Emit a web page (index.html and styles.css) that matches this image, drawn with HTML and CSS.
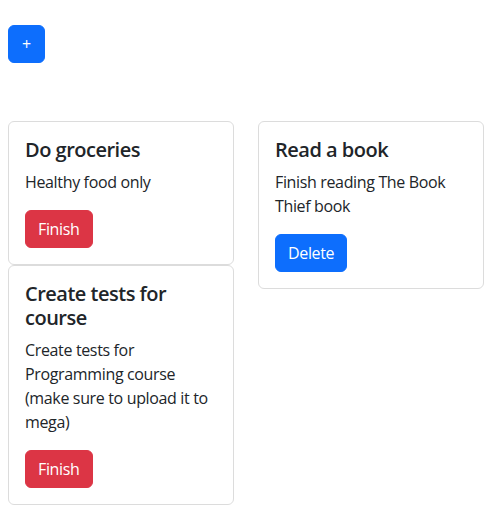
FILE: index.html
```html
<!DOCTYPE html>
<html lang="en">
<head>
<meta charset="utf-8">
<title>Tasks</title>
<link rel="stylesheet" href="styles.css">
</head>
<body>
<div class="toolbar">
  <button class="btn btn-primary btn-add">+</button>
</div>
<div class="board">
  <div class="column">
    <div class="card">
      <h5 class="card-title">Do groceries</h5>
      <p class="card-text">Healthy food only</p>
      <button class="btn btn-danger">Finish</button>
    </div>
    <div class="card">
      <h5 class="card-title">Create tests for course</h5>
      <p class="card-text">Create tests for Programming course (make sure to upload it to mega)</p>
      <button class="btn btn-danger">Finish</button>
    </div>
  </div>
  <div class="column">
    <div class="card">
      <h5 class="card-title">Read a book</h5>
      <p class="card-text">Finish reading The Book Thief book</p>
      <button class="btn btn-primary">Delete</button>
    </div>
  </div>
</div>
</body>
</html>
```
FILE: styles.css
```css
* { box-sizing: border-box; }
html, body { overflow: hidden; }
body {
  margin: 8px 0 0 8px;
  font-family: "Open Sans", "Noto Sans", sans-serif;
  font-size: 16px;
  line-height: 1.5;
  letter-spacing: -0.35px;
  color: #212529;
  background: #fff;
}
.toolbar { padding-top: 17px; }
.btn {
  display: inline-block;
  font-family: inherit;
  font-size: 16px;
  line-height: 24px;
  letter-spacing: -0.35px;
  padding: 6px 12px;
  border: 1px solid transparent;
  border-radius: 6px;
  color: #fff;
  cursor: pointer;
}
.btn-add { width: 37px; padding: 6px 0; text-align: center; }
.btn-primary { background: #0d6efd; border-color: #0d6efd; }
.btn-danger { background: #dc3545; border-color: #dc3545; }
.board {
  display: flex;
  gap: 24px;
  margin-top: 58px;
  align-items: flex-start;
}
.column {
  flex: 0 0 226px;
  width: 226px;
  display: flex;
  flex-direction: column;
}
.card {
  border: 1px solid #dcdcdc;
  border-radius: 6px;
  padding: 16px;
  background: #fff;
}
.card-title {
  margin: 0 0 8px;
  font-size: 20px;
  font-weight: 600;
  line-height: 1.2;
  letter-spacing: -0.5px;
}
.card-text { margin: 0 0 16px; }
```
